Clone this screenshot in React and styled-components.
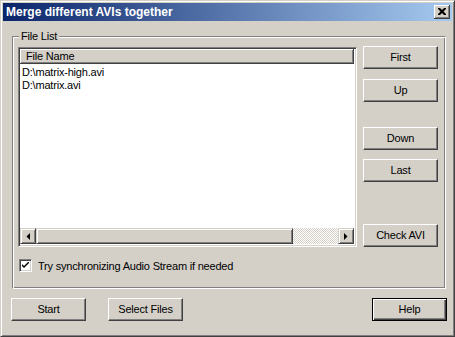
import React from "react";
import styled, { createGlobalStyle } from "styled-components";

const Global = createGlobalStyle`
  html, body {
    margin: 0;
    padding: 0;
    background: #d4d0c8;
  }
  * { box-sizing: border-box; }
`;

const Window = styled.div`
  width: 455px;
  height: 337px;
  background: #d4d0c8;
  border-top: 1px solid #d4d0c8;
  border-left: 1px solid #d4d0c8;
  border-right: 1px solid #404040;
  border-bottom: 1px solid #404040;
  box-shadow: inset 1px 1px 0 #ffffff, inset -1px -1px 0 #808080;
  padding: 2px;
  display: flex;
  flex-direction: column;
  font-family: "Liberation Sans", Arial, sans-serif;
  font-size: 11px;
  letter-spacing: -0.2px;
  color: #000;
`;

const TitleBar = styled.div`
  height: 18px;
  display: flex;
  align-items: center;
  justify-content: space-between;
  padding: 0 2px 0 2px;
  background: linear-gradient(to right, #0a246a, #a6caf0);
`;

const Title = styled.span`
  color: #ffffff;
  font-weight: bold;
  font-size: 12px;
  letter-spacing: 0;
  padding-left: 1px;
`;

const CloseButton = styled.div`
  width: 16px;
  height: 14px;
  background: #d4d0c8;
  border-right: 1px solid #404040;
  border-bottom: 1px solid #404040;
  box-shadow: inset 1px 1px 0 #ffffff, inset -1px -1px 0 #808080;
  display: flex;
  align-items: center;
  justify-content: center;
`;

const Body = styled.div`
  flex: 1;
  display: flex;
  flex-direction: column;
  padding: 15px 5px 0 8px;
`;

const Group = styled.div`
  position: relative;
  margin-left: 1px;
  width: 434px;
  height: 253px;
  border: 1px solid #808080;
  border-right-color: #ffffff;
  border-bottom-color: #ffffff;
  box-shadow: inset 1px 1px 0 #ffffff, inset -1px -1px 0 #808080;
  padding: 7px 7px 0 5px;
  display: flex;
  flex-direction: column;
`;

const Legend = styled.span`
  position: absolute;
  top: -7px;
  left: 6px;
  padding: 0 2px;
  background: #d4d0c8;
  line-height: 13px;
`;

const GroupRow = styled.div`
  display: flex;
  gap: 6px;
  height: 203px;
`;

const ListView = styled.div`
  width: 339px;
  height: 200px;
  margin-top: 3px;
  background: #ffffff;
  border-top: 1px solid #808080;
  border-left: 1px solid #808080;
  border-right: 1px solid #ffffff;
  border-bottom: 1px solid #ffffff;
  box-shadow: inset 1px 1px 0 #404040, inset -1px -1px 0 #d4d0c8;
  padding: 1px 2px 2px 1px;
  display: flex;
  flex-direction: column;
`;

const Header = styled.div`
  height: 15px;
  background: #d4d0c8;
  border-right: 1px solid #404040;
  border-bottom: 1px solid #404040;
  box-shadow: inset 1px 1px 0 #ffffff, inset -1px -1px 0 #808080;
  padding-left: 6px;
  display: flex;
  align-items: center;
`;

const Rows = styled.div`
  flex: 1;
  padding: 2px 0 0 2px;
`;

const Row = styled.div`
  height: 13px;
  line-height: 13px;
`;

const HScroll = styled.div`
  height: 16px;
  display: flex;
`;

const ScrollButton = styled.div`
  width: 16px;
  height: 16px;
  background: #d4d0c8;
  border-top: 1px solid #d4d0c8;
  border-left: 1px solid #d4d0c8;
  border-right: 1px solid #404040;
  border-bottom: 1px solid #404040;
  box-shadow: inset 1px 1px 0 #ffffff, inset -1px -1px 0 #808080;
  display: flex;
  align-items: center;
  justify-content: center;
`;

const Thumb = styled(ScrollButton)`
  width: 257px;
`;

const Track = styled.div`
  flex: 1;
  background-color: #ffffff;
  background-image: repeating-conic-gradient(#d4d0c8 0 25%, #ffffff 0 50%);
  background-size: 2px 2px;
`;

const ButtonColumn = styled.div`
  display: flex;
  flex-direction: column;
  padding-top: 2px;
`;

const Button = styled.div`
  width: 75px;
  height: 23px;
  margin-top: ${({ $gap }) => $gap || 0}px;
  margin-left: ${({ $left }) => $left || 0}px;
  background: #d4d0c8;
  border-top: 1px solid #ffffff;
  border-left: 1px solid #ffffff;
  border-right: 1px solid #404040;
  border-bottom: 1px solid #404040;
  box-shadow: inset -1px -1px 0 #808080;
  display: flex;
  align-items: center;
  justify-content: center;
  padding-bottom: 1px;
`;

const DefaultButton = styled(Button)`
  border: 1px solid #000000;
  box-shadow: inset 1px 1px 0 #ffffff, inset -1px -1px 0 #404040,
    inset -2px -2px 0 #808080;
`;

const PushBottom = styled.div`
  margin-top: auto;
`;

const CheckRow = styled.div`
  display: flex;
  align-items: center;
  gap: 6px;
  margin-top: 12px;
  margin-left: 1px;
`;

const CheckBox = styled.div`
  width: 13px;
  height: 13px;
  background: #ffffff;
  border-top: 1px solid #808080;
  border-left: 1px solid #808080;
  border-right: 1px solid #ffffff;
  border-bottom: 1px solid #ffffff;
  box-shadow: inset 1px 1px 0 #404040, inset -1px -1px 0 #d4d0c8;
  display: flex;
  align-items: center;
  justify-content: center;
`;

const BottomRow = styled.div`
  display: flex;
  margin-top: 9px;
`;

const Spacer = styled.div`
  flex: 1;
`;

const Arrow = ({ dir }) => (
  <svg width="4" height="7" viewBox="0 0 4 7">
    {dir === "left" ? (
      <path d="M4 0 L4 7 L0.5 3.5 Z" fill="#000" />
    ) : (
      <path d="M0 0 L0 7 L3.5 3.5 Z" fill="#000" />
    )}
  </svg>
);

export default function App() {
  return (
    <>
      <Global />
      <Window>
        <TitleBar>
          <Title>Merge different AVIs together</Title>
          <CloseButton>
            <svg width="8" height="7" viewBox="0 0 8 7">
              <path
                d="M0 0h2l2 2 2-2h2v1l-2.5 2.5 2.5 2.5v1h-2l-2-2-2 2h-2v-1l2.5-2.5-2.5-2.5z"
                fill="#000"
              />
            </svg>
          </CloseButton>
        </TitleBar>
        <Body>
          <Group>
            <Legend>File List</Legend>
            <GroupRow>
              <ListView>
                <Header>File Name</Header>
                <Rows>
                  <Row>D:\matrix-high.avi</Row>
                  <Row>D:\matrix.avi</Row>
                </Rows>
                <HScroll>
                  <ScrollButton>
                    <Arrow dir="left" />
                  </ScrollButton>
                  <Thumb />
                  <Track />
                  <ScrollButton>
                    <Arrow dir="right" />
                  </ScrollButton>
                </HScroll>
              </ListView>
              <ButtonColumn>
                <Button>First</Button>
                <Button $gap={10}>Up</Button>
                <Button $gap={25}>Down</Button>
                <Button $gap={9}>Last</Button>
                <PushBottom>
                  <Button>Check AVI</Button>
                </PushBottom>
              </ButtonColumn>
            </GroupRow>
            <CheckRow>
              <CheckBox>
                <svg width="7" height="7" viewBox="0 0 7 7">
                  <path
                    d="M0 2 L0 4 L2 6 L7 1 L7 -1 L2 4 Z"
                    fill="#000"
                  />
                </svg>
              </CheckBox>
              <span>Try synchronizing Audio Stream if needed</span>
            </CheckRow>
          </Group>
          <BottomRow>
            <Button>Start</Button>
            <Button $left={22}>Select Files</Button>
            <Spacer />
            <DefaultButton>Help</DefaultButton>
          </BottomRow>
        </Body>
      </Window>
    </>
  );
}
